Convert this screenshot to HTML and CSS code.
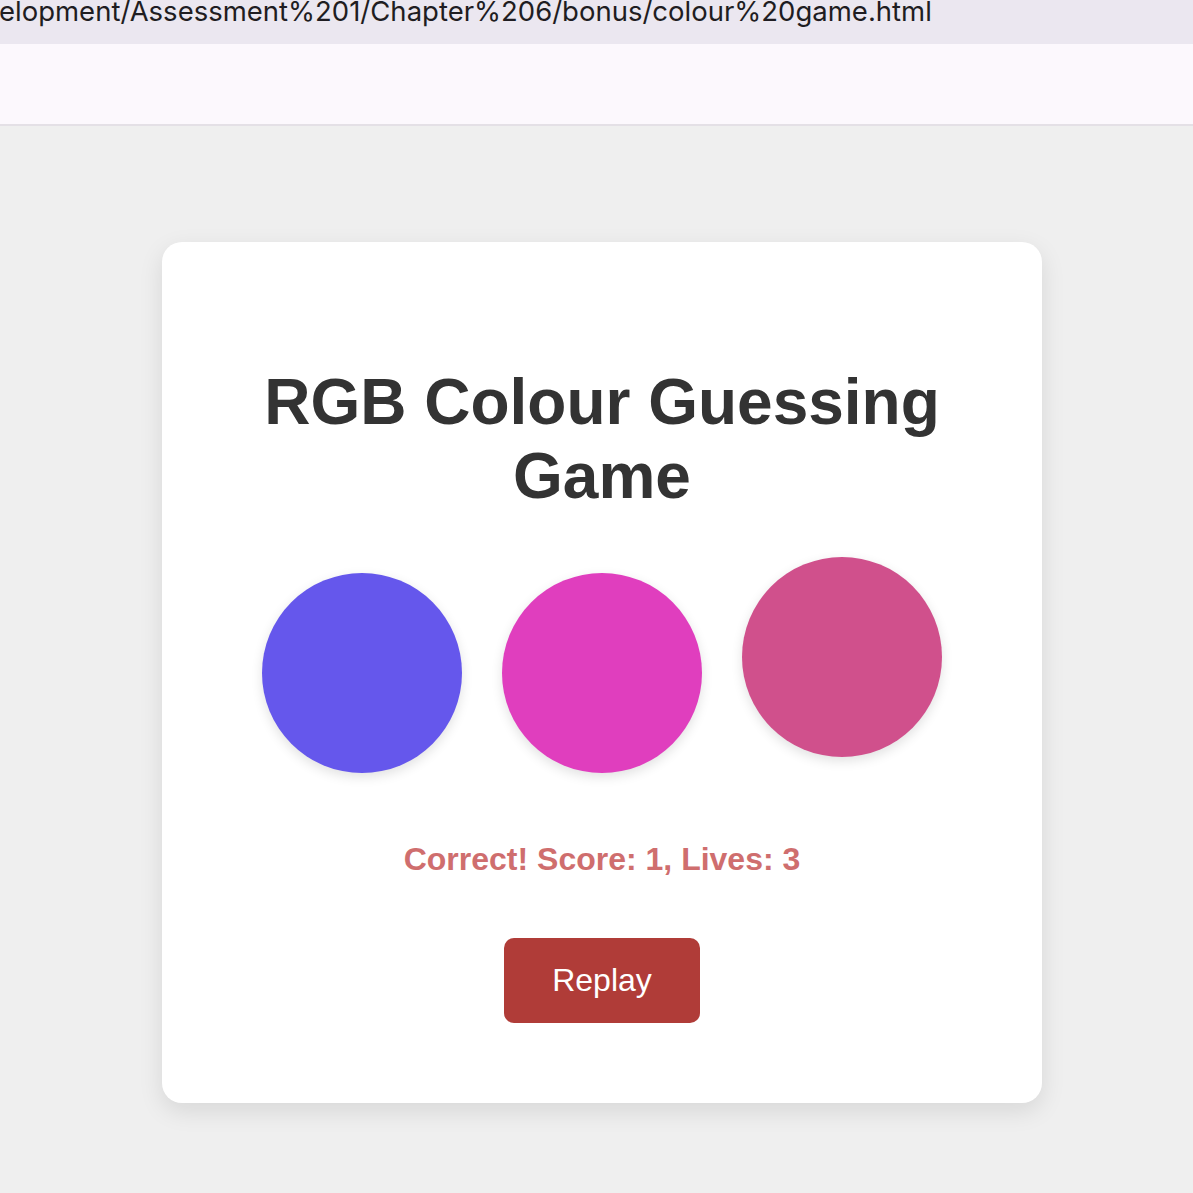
FILE: index.html
```html
<!DOCTYPE html>
<html lang="en">
<head>
<meta charset="utf-8">
<title>RGB Colour Guessing Game</title>
<link rel="stylesheet" href="styles.css">
</head>
<body>
  <div class="urlbar"><span class="url">elopment/Assessment%201/Chapter%206/bonus/colour%20game.html</span></div>
  <div class="toolbar"></div>
  <main class="page">
    <section class="card">
      <h1 class="title">RGB Colour Guessing Game</h1>
      <div class="circles">
        <div class="circle c1"></div>
        <div class="circle c2"></div>
        <div class="circle c3 raised"></div>
      </div>
      <p class="message">Correct! Score: 1, Lives: 3</p>
      <button class="replay">Replay</button>
    </section>
  </main>
</body>
</html>
```
FILE: styles.css
```css
html, body {
  margin: 0;
  padding: 0;
  background: #efefef;
  overflow: hidden;
}
body {
  width: 1193px;
  height: 1193px;
}
.urlbar {
  height: 44px;
  background: #ebe7f0;
  overflow: hidden;
  white-space: nowrap;
}
.url {
  display: block;
  font-family: "Inter", "Liberation Sans", sans-serif;
  font-size: 27.5px;
  line-height: 28px;
  color: #1f1d22;
  margin-left: -1px;
  margin-top: -3px;
}
.toolbar {
  height: 80px;
  background: #fcf8fd;
  border-bottom: 2px solid #e4e0e6;
}
.page {
  padding-top: 116px;
  font-family: "Liberation Sans", Arial, sans-serif;
}
.card {
  box-sizing: border-box;
  width: 880px;
  margin-left: 162px;
  padding: 80px;
  background: #ffffff;
  border-radius: 20px;
  box-shadow: 0 8px 24px rgba(0, 0, 0, 0.1);
  text-align: center;
}
.title {
  margin: 44px 0 0;
  font-size: 64px;
  font-weight: bold;
  line-height: 73.6px;
  color: #333333;
}
.circles {
  display: flex;
  justify-content: center;
  align-items: flex-start;
  gap: 40px;
  margin-top: 60px;
}
.circle {
  width: 200px;
  height: 200px;
  border-radius: 50%;
  box-shadow: 0 4px 12px rgba(0, 0, 0, 0.12);
}
.raised {
  transform: translateY(-16px);
}
.c1 { background: rgb(101, 87, 236); }
.c2 { background: rgb(224, 62, 190); }
.c3 { background: rgb(208, 80, 140); }
.message {
  margin: 68px 0 0;
  font-size: 32px;
  font-weight: bold;
  line-height: 36.8px;
  color: #cf6e6e;
}
.replay {
  margin-top: 60px;
  padding: 24px 48px;
  border: none;
  border-radius: 10px;
  background: #b03c38;
  color: #ffffff;
  font-family: "Liberation Sans", Arial, sans-serif;
  font-size: 32px;
  line-height: 36.8px;
}
```
